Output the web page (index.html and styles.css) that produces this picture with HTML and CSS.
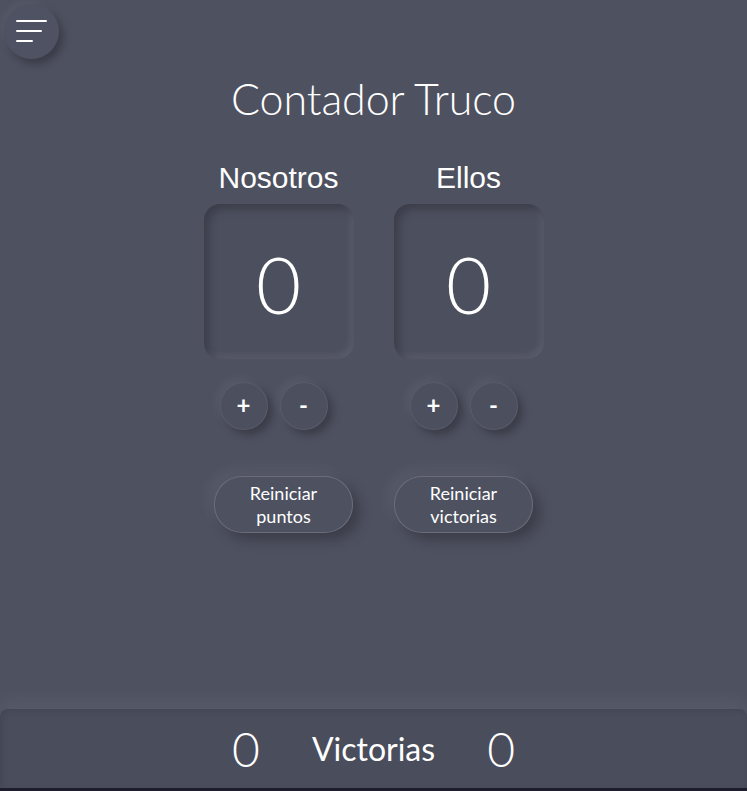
FILE: index.html
```html
<!DOCTYPE html>
<html lang="es">
<head>
<meta charset="utf-8">
<title>Contador Truco</title>
<link rel="stylesheet" href="styles.css">
</head>
<body>
<div class="app">
  <button class="menu-btn" aria-label="Menú">
    <span class="line l1"></span>
    <span class="line l2"></span>
    <span class="line l3"></span>
  </button>
  <h1 class="title">Contador Truco</h1>
  <div class="teams">
    <section class="team">
      <h2 class="team-name">Nosotros</h2>
      <div class="score-box">0</div>
      <div class="controls">
        <button class="round-btn">+</button>
        <button class="round-btn">-</button>
      </div>
    </section>
    <section class="team">
      <h2 class="team-name">Ellos</h2>
      <div class="score-box">0</div>
      <div class="controls">
        <button class="round-btn">+</button>
        <button class="round-btn">-</button>
      </div>
    </section>
  </div>
  <div class="resets">
    <button class="reset-btn">Reiniciar<br>puntos</button>
    <button class="reset-btn">Reiniciar<br>victorias</button>
  </div>
  <div class="spacer"></div>
  <footer class="wins">
    <span class="wins-num">0</span>
    <span class="wins-label">Victorias</span>
    <span class="wins-num">0</span>
  </footer>
</div>
</body>
</html>
```
FILE: styles.css
```css
html, body {
  margin: 0;
  padding: 0;
}
body {
  background: #1e1d2c;
  height: 791px;
  overflow: hidden;
}
.app {
  position: relative;
  height: 788px;
  background: #4e5160;
  display: flex;
  flex-direction: column;
  color: #ffffff;
  font-family: "Lato", "Liberation Sans", sans-serif;
}
button {
  font-family: inherit;
  color: #ffffff;
  cursor: pointer;
}
.menu-btn {
  position: absolute;
  left: 4px;
  top: 4px;
  width: 55px;
  height: 55px;
  border-radius: 50%;
  border: none;
  padding: 0;
  background: #4f5262;
  box-shadow: 4px 5px 9px rgba(0, 0, 0, 0.28), -3px -3px 7px rgba(255, 255, 255, 0.05);
}
.menu-btn .line {
  position: absolute;
  left: 12px;
  height: 2px;
  background: #ffffff;
  border-radius: 1px;
}
.menu-btn .l1 { top: 16px; width: 31px; }
.menu-btn .l2 { top: 26px; width: 26px; }
.menu-btn .l3 { top: 36px; width: 17px; }

.title {
  margin: 71px 0 0;
  text-align: center;
  font-weight: 300;
  font-size: 43px;
  line-height: 56px;
  letter-spacing: -0.1px;
}
.teams {
  margin-top: 34px;
  display: grid;
  grid-template-columns: 150px 150px;
  column-gap: 40px;
  justify-content: center;
}
.team {
  display: flex;
  flex-direction: column;
}
.team-name {
  margin: 0;
  text-align: center;
  font-family: "Liberation Sans", Arial, sans-serif;
  font-weight: 400;
  font-size: 30px;
  line-height: 34px;
}
.score-box {
  margin-top: 9px;
  height: 155px;
  border-radius: 16px;
  background: #4c4f5e;
  box-shadow: inset 5px 5px 8px rgba(0, 0, 0, 0.22), inset -4px -4px 6px rgba(255, 255, 255, 0.07);
  display: flex;
  align-items: center;
  justify-content: center;
  font-weight: 300;
  font-size: 78px;
  padding-top: 4px;
  box-sizing: border-box;
}
.controls {
  margin-top: 23px;
  padding-left: 16px;
  display: flex;
  gap: 12px;
}
.round-btn {
  width: 48px;
  height: 48px;
  border-radius: 50%;
  border: 1px solid rgba(255, 255, 255, 0.07);
  background: #4c4f5e;
  box-shadow: 5px 5px 9px rgba(0, 0, 0, 0.26), -4px -4px 9px rgba(255, 255, 255, 0.05);
  font-size: 24px;
  font-weight: 700;
  line-height: 1;
  padding: 0 0 2px;
}
.resets {
  margin-top: 46px;
  display: flex;
  justify-content: center;
  gap: 41px;
}
.reset-btn {
  width: 139px;
  height: 57px;
  border-radius: 28px;
  border: 1px solid rgba(255, 255, 255, 0.16);
  background: #4e5160;
  box-shadow: 7px 7px 13px rgba(0, 0, 0, 0.25), -7px -7px 14px rgba(255, 255, 255, 0.05);
  font-size: 18px;
  font-weight: 400;
  line-height: 23px;
  padding: 0;
}
.spacer {
  flex: 1;
}
.wins {
  height: 79px;
  border-radius: 8px 8px 0 0;
  background: #4a4d5b;
  box-shadow: 0 -10px 18px rgba(255, 255, 255, 0.05), inset 2px 2px 6px rgba(0, 0, 0, 0.1);
  display: flex;
  align-items: center;
  justify-content: center;
  gap: 52px;
}
.wins-num {
  font-weight: 300;
  font-size: 48px;
  line-height: 1;
}
.wins-label {
  font-weight: 400;
  font-size: 32px;
  line-height: 1;
}
```
